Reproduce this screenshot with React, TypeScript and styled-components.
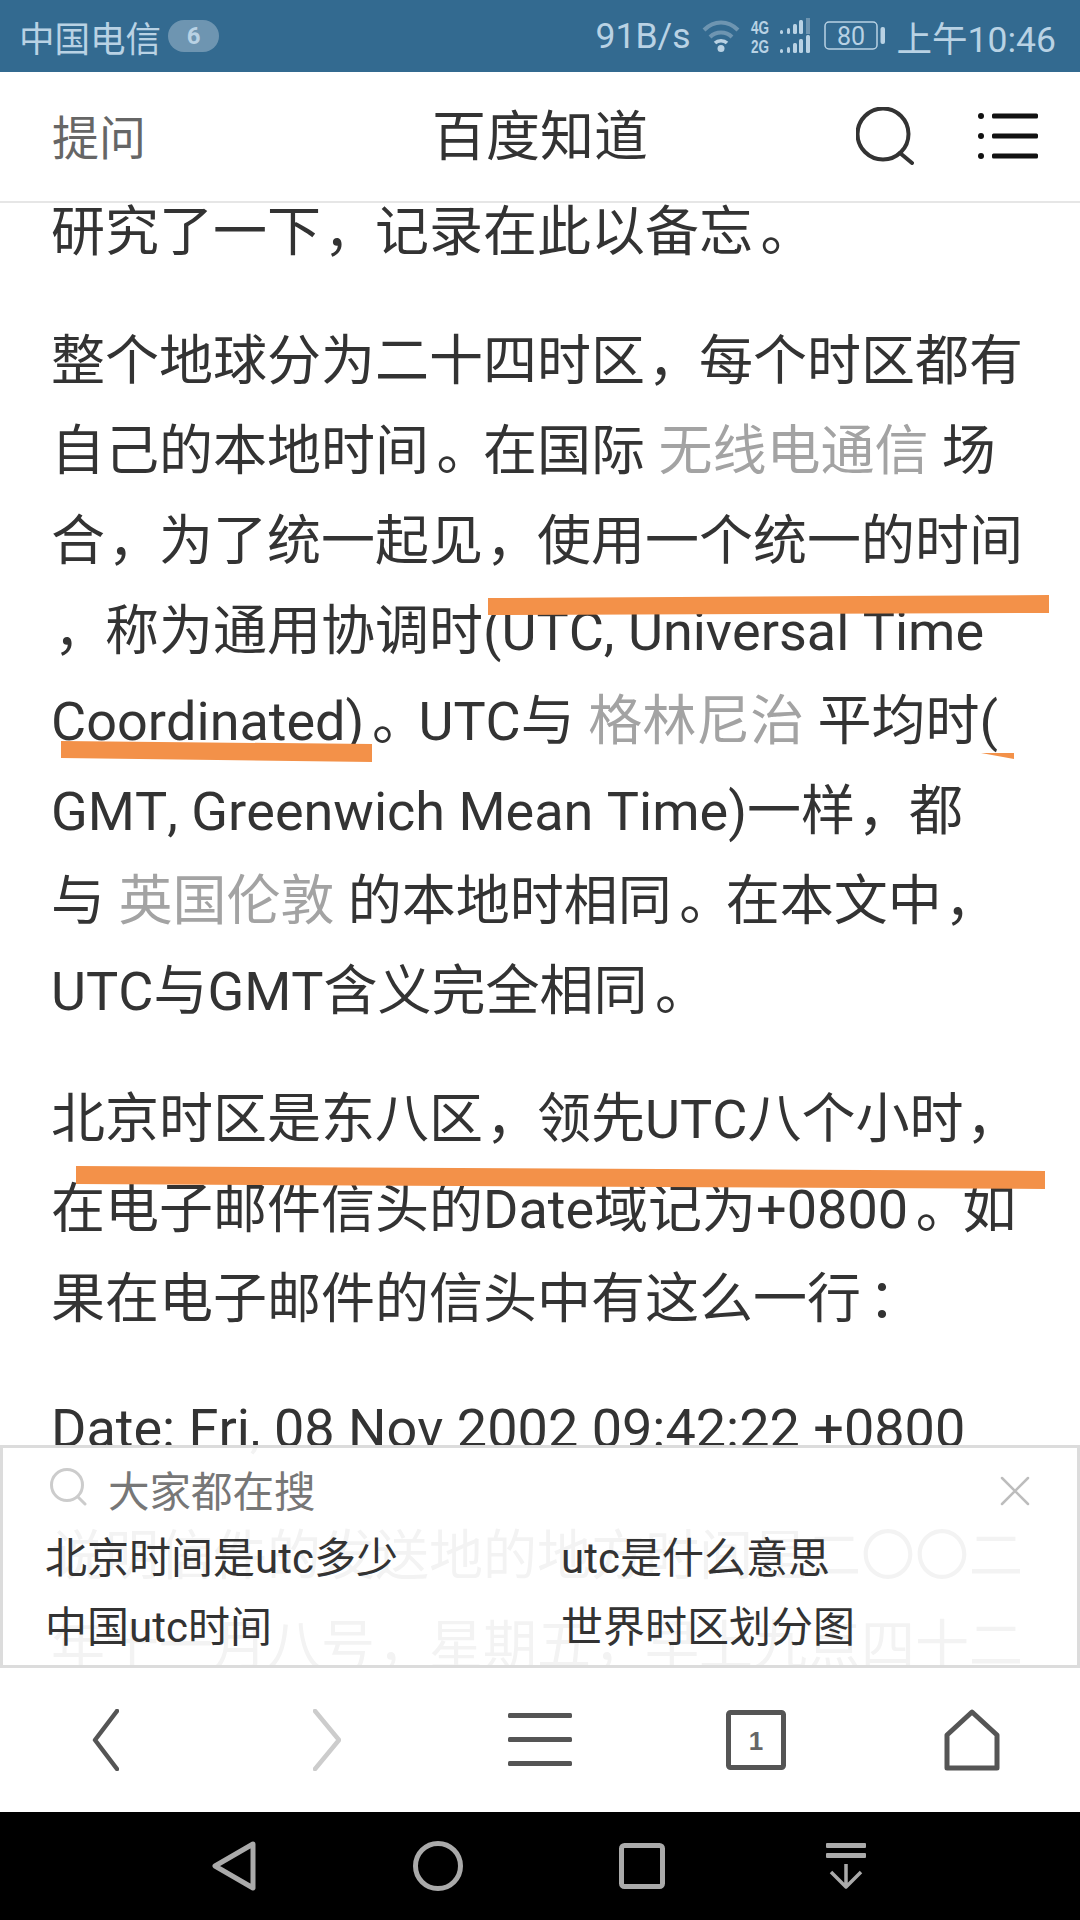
import React from "react";
import styled, { createGlobalStyle } from "styled-components";

const GlobalStyle = createGlobalStyle`
  html, body {
    margin: 0;
    padding: 0;
    background: #fff;
  }
  * {
    box-sizing: border-box;
  }
`;

const FONT = `Roboto, "Noto Sans CJK SC", "Noto Sans", sans-serif`;

const Page = styled.div`
  width: 1080px;
  height: 1920px;
  display: flex;
  flex-direction: column;
  overflow: hidden;
  background: #fff;
  font-family: ${FONT};
`;

const StatusBar = styled.div`
  height: 72px;
  flex: none;
  display: flex;
  align-items: center;
  justify-content: space-between;
  padding: 0 24px 0 19px;
  background: #336a90;
  color: #b9d2e4;
  font-size: 35.5px;
`;

const StatusGroup = styled.div`
  display: flex;
  align-items: center;
`;

const Badge = styled.span`
  width: 51px;
  height: 32px;
  margin-left: 7px;
  border-radius: 16px;
  background: #6e95b1;
  font-size: 24px;
  font-weight: 700;
  line-height: 32px;
  text-align: center;
`;

const StatusIcon = styled.svg<{ $gap: number }>`
  flex: none;
  display: block;
  margin-left: ${(p) => p.$gap}px;
`;

const Clock = styled.span`
  margin-left: 11px;
`;

const Header = styled.header`
  height: 131px;
  flex: none;
  display: grid;
  grid-template-columns: 1fr auto 1fr;
  align-items: center;
  padding: 0 42px 2px 52px;
  border-bottom: 2px solid #e6e6e6;
`;

const Ask = styled.span`
  margin-bottom: 2px;
  font-size: 47px;
  color: #666;
`;

const Title = styled.h1`
  margin: 0 10px 6px 0;
  font-size: 54px;
  font-weight: 400;
  color: #333;
`;

const HeaderActions = styled.div`
  display: flex;
  justify-content: flex-end;
  align-items: center;
  gap: 64px;
`;

const Main = styled.main`
  flex: 1;
  position: relative;
  overflow: hidden;
`;

const Article = styled.article`
  margin-top: -15px;
  padding: 0 0 0 51px;
  font-size: 54px;
  line-height: 90px;
  color: #333;
  font-kerning: none;
`;

const Para = styled.div`
  margin-bottom: 38.5px;
`;

const Line = styled.div`
  white-space: nowrap;
`;

const Link = styled.span`
  color: #a3a3a3;
`;

// full width marks sit nearer the middle of their cell on the phone
const Comma = styled.span`
  margin-left: 0.05em;
  margin-right: -0.05em;
`;

const Stop = styled.span`
  margin-left: 0.14em;
  margin-right: -0.14em;
`;

const Marks = styled.svg`
  position: absolute;
  left: 0;
  top: 0;
  pointer-events: none;
`;

const Suggest = styled.aside`
  position: absolute;
  left: 0;
  right: 0;
  bottom: 0;
  height: 223px;
  padding: 18px 0 0 42px;
  border: 3px solid #dcdcdc;
  background: rgba(255, 255, 255, 0.94);
`;

const SuggestHead = styled.div`
  height: 46px;
  display: flex;
  align-items: center;
  padding: 0 47px 0 5px;
  font-size: 41.5px;
  color: #777;
`;

const SuggestLabel = styled.span`
  flex: 1;
  margin-left: 20px;
`;

const SuggestSearch = styled.svg`
  margin-bottom: 4px;
`;

const SuggestClose = styled.svg`
  margin-top: 4px;
`;

const SuggestGrid = styled.div`
  margin-top: 8px;
  display: grid;
  grid-template-columns: 516px 1fr;
  grid-auto-rows: 69px;
  align-items: center;
  font-size: 42px;
  color: #333;
`;

const Toolbar = styled.nav`
  height: 144px;
  flex: none;
  display: grid;
  grid-template-columns: repeat(5, 1fr);
  place-items: center;
  background: #fff;
`;

const SystemBar = styled.nav`
  height: 108px;
  flex: none;
  display: grid;
  grid-template-columns: repeat(4, 204px);
  justify-content: center;
  place-items: center;
  background: #000;
`;

const ChevronSvg = styled.svg<{ $dir: "left" | "right" }>`
  margin-left: ${(p) => (p.$dir === "right" ? 6 : 0)}px;
  margin-right: ${(p) => (p.$dir === "left" ? 6 : 0)}px;
`;

const TabCount = styled.text`
  font-family: "Liberation Sans", sans-serif;
  font-size: 26px;
  font-weight: 700;
  fill: #666;
`;

const TinyLabel = styled.text`
  font-family: "Liberation Sans", sans-serif;
  font-size: 18px;
  font-weight: 700;
  fill: #b9d2e4;
`;

const BatteryLabel = styled.text`
  font-family: Roboto, sans-serif;
  font-size: 25px;
  fill: #b9d2e4;
`;

const WifiIcon = () => (
  <StatusIcon $gap={11} width="38" height="32" viewBox="0 0 38 32">
    <path d="M2 10 C12 0 26 0 36 10" fill="none" stroke="#6e95b1" strokeWidth="4" />
    <path d="M8 17 C14 11 24 11 30 17" fill="none" stroke="#6e95b1" strokeWidth="4" />
    <path d="M13 23 C16 20 22 20 25 23" fill="none" stroke="#b9d2e4" strokeWidth="3.5" />
    <circle cx="19" cy="28.5" r="3.5" fill="#b9d2e4" />
  </StatusIcon>
);

const signalBars = [
  { x: 30, w: 3, h: 4 },
  { x: 37, w: 3, h: 6 },
  { x: 43, w: 4, h: 10 },
  { x: 49, w: 4, h: 14 },
];

const SignalIcon = () => (
  <StatusIcon $gap={10} width="60" height="36" viewBox="0 0 60 36">
    <TinyLabel x="1" y="16" textLength="18" lengthAdjust="spacingAndGlyphs">4G</TinyLabel>
    <TinyLabel x="1" y="35" textLength="18" lengthAdjust="spacingAndGlyphs">2G</TinyLabel>
    {signalBars.map((b) => (
      <rect key={b.x} x={b.x} y={16 - b.h} width={b.w} height={b.h} rx="1.5" fill="#b9d2e4" />
    ))}
    <rect x="56" y="0" width="4" height="16" fill="#6e95b1" />
    {signalBars.map((b) => (
      <rect key={b.x} x={b.x} y={35 - b.h} width={b.w} height={b.h} rx="1.5" fill="#b9d2e4" />
    ))}
    <rect x="56" y="17" width="4" height="18" rx="1.5" fill="#b9d2e4" />
  </StatusIcon>
);

const BatteryIcon = () => (
  <StatusIcon $gap={14} width="62" height="30" viewBox="0 0 62 30">
    <rect x="1" y="1" width="52" height="27" rx="4" fill="none" stroke="#b9d2e4" strokeWidth="1.5" />
    <BatteryLabel x="13" y="23.5">80</BatteryLabel>
    <rect x="56.5" y="6" width="4.5" height="17" rx="2" fill="#b9d2e4" />
  </StatusIcon>
);

const SearchIcon = () => (
  <svg width="58" height="58" viewBox="0 0 58 58">
    <circle cx="27" cy="27" r="25.5" fill="none" stroke="#333" strokeWidth="4" />
    <path d="M44 46 L56 56" stroke="#333" strokeWidth="4" strokeLinecap="round" />
  </svg>
);

const MenuIcon = () => (
  <svg width="60" height="46" viewBox="0 0 60 46" fill="#111">
    {[3, 23, 43].map((y) => (
      <g key={y}>
        <circle cx="3" cy={y} r="3" />
        <rect x="14" y={y - 2.5} width="46" height="5" rx="1.5" />
      </g>
    ))}
  </svg>
);

const SmallSearchIcon = () => (
  <SuggestSearch width="38" height="38" viewBox="0 0 38 38">
    <circle cx="17" cy="17" r="15.5" fill="none" stroke="#ccc" strokeWidth="3" />
    <path d="M28 29 L35 36" stroke="#ccc" strokeWidth="3" strokeLinecap="round" />
  </SuggestSearch>
);

const CloseIcon = () => (
  <SuggestClose width="30" height="30" viewBox="0 0 30 30">
    <path d="M2 2 L28 28 M28 2 L2 28" stroke="#bdbdbd" strokeWidth="2.5" strokeLinecap="round" />
  </SuggestClose>
);

const Chevron = ({ dir, color }: { dir: "left" | "right"; color: string }) => (
  <ChevronSvg $dir={dir} width="28" height="62" viewBox="0 0 28 62">
    <path
      d={dir === "left" ? "M26 2 L4 31 L26 60" : "M2 2 L26 31 L2 60"}
      fill="none"
      stroke={color}
      strokeWidth="4.5"
      strokeLinecap="round"
      strokeLinejoin="round"
    />
  </ChevronSvg>
);

const LinesIcon = () => (
  <svg width="64" height="54" viewBox="0 0 64 54" fill="#555">
    <rect x="0" y="0" width="64" height="5" rx="1.5" />
    <rect x="0" y="24" width="64" height="5" rx="1.5" />
    <rect x="0" y="48" width="64" height="5" rx="1.5" />
  </svg>
);

const TabsIcon = () => (
  <svg width="60" height="60" viewBox="0 0 60 60">
    <rect x="2.5" y="2.5" width="55" height="55" rx="2" fill="none" stroke="#555" strokeWidth="5" />
    <TabCount x="30" y="40" textAnchor="middle">1</TabCount>
  </svg>
);

const HomeIcon = () => (
  <svg width="56" height="62" viewBox="0 0 56 62">
    <path
      d="M3 59 L3 26 L28 3 L53 26 L53 59 Z"
      fill="none"
      stroke="#555"
      strokeWidth="5"
      strokeLinejoin="round"
    />
  </svg>
);

const SysBack = () => (
  <svg width="44" height="50" viewBox="0 0 44 50">
    <path
      d="M41 3 L3 25 L41 47 Z"
      fill="none"
      stroke="#aaa"
      strokeWidth="5"
      strokeLinejoin="round"
    />
  </svg>
);

const SysHome = () => (
  <svg width="50" height="50" viewBox="0 0 50 50">
    <circle cx="25" cy="25" r="22.5" fill="none" stroke="#aaa" strokeWidth="5" />
  </svg>
);

const SysRecent = () => (
  <svg width="46" height="46" viewBox="0 0 46 46">
    <rect x="2.5" y="2.5" width="41" height="41" rx="3" fill="none" stroke="#aaa" strokeWidth="5" />
  </svg>
);

const SysPull = () => (
  <svg width="40" height="46" viewBox="0 0 40 46">
    <rect x="0" y="0" width="40" height="5" rx="1" fill="#aaa" />
    <rect x="0" y="10" width="40" height="5" rx="1" fill="#aaa" />
    <path
      d="M20 21 L20 44 M5 29 L20 44 L35 29"
      fill="none"
      stroke="#aaa"
      strokeWidth="3.5"
      strokeLinejoin="round"
    />
  </svg>
);

// hand drawn highlighter strokes on the screenshot, page y minus 203
const strokes = [
  "488,395 1049,392 1049,410 488,412",
  "61,538 372,541 372,559 61,555",
  "981,550 1014,550 1014,556",
  "76,963 1045,968 1045,986 76,981",
];

export default function App() {
  return (
    <Page>
      <GlobalStyle />
      <StatusBar>
        <StatusGroup>
          中国电信
          <Badge>6</Badge>
        </StatusGroup>
        <StatusGroup>
          91B/s
          <WifiIcon />
          <SignalIcon />
          <BatteryIcon />
          <Clock>上午10:46</Clock>
        </StatusGroup>
      </StatusBar>
      <Header>
        <Ask>提问</Ask>
        <Title>百度知道</Title>
        <HeaderActions>
          <SearchIcon />
          <MenuIcon />
        </HeaderActions>
      </Header>
      <Main>
        <Article>
          <Para>
            <Line>研究了一下<Comma>，</Comma>记录在此以备忘<Stop>。</Stop></Line>
          </Para>
          <Para>
            <Line>整个地球分为二十四时区<Comma>，</Comma>每个时区都有</Line>
            <Line>
              自己的本地时间<Stop>。</Stop>在国际 <Link>无线电通信</Link> 场
            </Line>
            <Line>合<Comma>，</Comma>为了统一起见<Comma>，</Comma>使用一个统一的时间</Line>
            <Line><Comma>，</Comma>称为通用协调时(UTC, Universal Time</Line>
            <Line>
              Coordinated)<Stop>。</Stop>UTC与 <Link>格林尼治</Link> 平均时(
            </Line>
            <Line>GMT, Greenwich Mean Time)一样<Comma>，</Comma>都</Line>
            <Line>
              与 <Link>英国伦敦</Link> 的本地时相同<Stop>。</Stop>在本文中<Comma>，</Comma>
            </Line>
            <Line>UTC与GMT含义完全相同<Stop>。</Stop></Line>
          </Para>
          <Para>
            <Line>北京时区是东八区<Comma>，</Comma>领先UTC八个小时<Comma>，</Comma></Line>
            <Line>在电子邮件信头的Date域记为+0800<Stop>。</Stop>如</Line>
            <Line>果在电子邮件的信头中有这么一行<Stop>：</Stop></Line>
          </Para>
          <Para>
            <Line>Date: Fri, 08 Nov 2002 09:42:22 +0800</Line>
          </Para>
          <Para>
            <Line>说明信件的发送地的地方时间是二〇〇二</Line>
            <Line>年十一月八号<Comma>，</Comma>星期五<Comma>，</Comma>早上九点四十二</Line>
          </Para>
        </Article>
        <Marks width="1080" height="1000" viewBox="0 0 1080 1000">
          {strokes.map((points) => (
            <polygon key={points} points={points} fill="#f39149" />
          ))}
        </Marks>
        <Suggest>
          <SuggestHead>
            <SmallSearchIcon />
            <SuggestLabel>大家都在搜</SuggestLabel>
            <CloseIcon />
          </SuggestHead>
          <SuggestGrid>
            <span>北京时间是utc多少</span>
            <span>utc是什么意思</span>
            <span>中国utc时间</span>
            <span>世界时区划分图</span>
          </SuggestGrid>
        </Suggest>
      </Main>
      <Toolbar>
        <Chevron dir="left" color="#555" />
        <Chevron dir="right" color="#ccc" />
        <LinesIcon />
        <TabsIcon />
        <HomeIcon />
      </Toolbar>
      <SystemBar>
        <SysBack />
        <SysHome />
        <SysRecent />
        <SysPull />
      </SystemBar>
    </Page>
  );
}
